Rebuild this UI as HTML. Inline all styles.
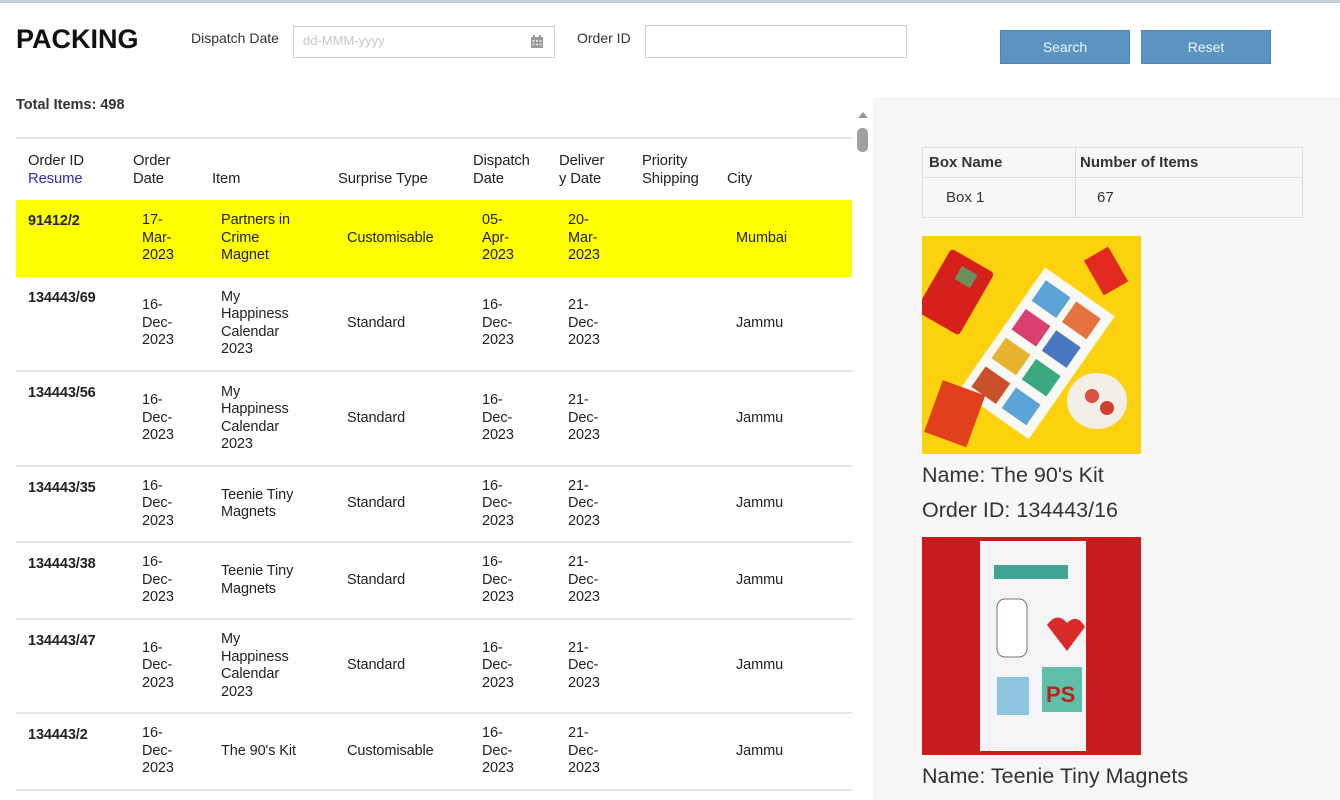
<!DOCTYPE html>
<html><head><meta charset="utf-8"><style>
*{margin:0;padding:0;box-sizing:border-box}
body{width:1340px;height:800px;overflow:hidden;background:#fff;font-family:"Liberation Sans",sans-serif;color:#222;position:relative;font-size:14.5px}
.a{position:absolute}
.topline{left:0;top:0;width:1340px;height:3px;background:#c8ccd4}
.row{position:absolute;left:16px;width:836px;border-bottom:2px solid #e6e6e6}
.c{position:absolute;top:0;height:100%;display:flex;align-items:center;line-height:17.5px;letter-spacing:-0.1px}
.id{align-items:flex-start;padding-top:13px;font-weight:bold}
.hd{position:absolute;line-height:18px;font-size:14.8px;letter-spacing:-0.1px}
.btn{background:#5b93c1;color:#eef4fa;font-size:14px;display:flex;align-items:center;justify-content:center;border:1px solid #4f86b4}
</style></head><body>
<div class="a topline"></div>
<div class="a" style="left:16px;top:24px;font-size:27px;font-weight:bold;color:#111">PACKING</div>
<div class="a" style="left:191px;top:30px;font-size:14px;color:#333">Dispatch Date</div>
<div class="a" style="left:293px;top:26px;width:262px;height:32px;border:1px solid #ccc;border-right:none"></div>
<div class="a" style="left:554px;top:26px;width:1px;height:32px;background:#ccc"></div>
<div class="a" style="left:303px;top:33px;font-size:13px;color:#c8c8c8">dd-MMM-yyyy</div>
<svg class="a" style="left:530px;top:34px" width="14" height="15" viewBox="0 0 14 15"><rect x="1" y="3" width="12" height="11" fill="#999"/><rect x="3" y="1" width="2" height="3" fill="#999"/><rect x="9" y="1" width="2" height="3" fill="#999"/><g fill="#ddd"><rect x="2.5" y="6" width="2" height="2"/><rect x="6" y="6" width="2" height="2"/><rect x="9.5" y="6" width="2" height="2"/><rect x="2.5" y="9.5" width="2" height="2"/><rect x="6" y="9.5" width="2" height="2"/><rect x="9.5" y="9.5" width="2" height="2"/></g></svg>
<div class="a" style="left:577px;top:30px;font-size:14px;color:#333">Order ID</div>
<div class="a" style="left:645px;top:25px;width:262px;height:33px;border:1px solid #ccc"></div>
<div class="a btn" style="left:1000px;top:30px;width:130px;height:34px">Search</div>
<div class="a btn" style="left:1141px;top:30px;width:130px;height:34px">Reset</div>
<div class="a" style="left:16px;top:97px;font-size:14.5px;font-weight:bold;color:#333">Total Items: 498</div>
<div class="a" style="left:16px;top:137px;width:836px;height:2px;background:#e6e6e6"></div>
<svg class="a" style="left:857px;top:110px" width="12" height="10"><path d="M1 8 L6 2 L11 8Z" fill="#999"/></svg>
<div class="a" style="left:857px;top:128px;width:11px;height:24px;border-radius:5px;background:#a0a0a0"></div>
<div class="hd" style="left:28px;top:152px">Order ID<br><span style="color:#2a2ac8">Resume</span></div>
<div class="hd" style="left:133px;top:152px">Order<br>Date</div>
<div class="hd" style="left:212px;top:170px">Item</div>
<div class="hd" style="left:338px;top:170px">Surprise Type</div>
<div class="hd" style="left:473px;top:152px">Dispatch<br>Date</div>
<div class="hd" style="left:559px;top:152px">Deliver<br>y Date</div>
<div class="hd" style="left:642px;top:152px">Priority<br>Shipping</div>
<div class="hd" style="left:727px;top:170px">City</div>
<div class="row" style="top:200px;height:77px;background:#ffff00;border-bottom:none">
<div class="c id" style="left:12px">91412/2</div>
<div class="c" style="left:126px">17-<br>Mar-<br>2023</div>
<div class="c" style="left:205px">Partners in<br>Crime<br>Magnet</div>
<div class="c" style="left:331px">Customisable</div>
<div class="c" style="left:466px">05-<br>Apr-<br>2023</div>
<div class="c" style="left:552px">20-<br>Mar-<br>2023</div>
<div class="c" style="left:720px">Mumbai</div>
</div>
<div class="row" style="top:277px;height:95px">
<div class="c id" style="left:12px">134443/69</div>
<div class="c" style="left:126px">16-<br>Dec-<br>2023</div>
<div class="c" style="left:205px">My<br>Happiness<br>Calendar<br>2023</div>
<div class="c" style="left:331px">Standard</div>
<div class="c" style="left:466px">16-<br>Dec-<br>2023</div>
<div class="c" style="left:552px">21-<br>Dec-<br>2023</div>
<div class="c" style="left:720px">Jammu</div>
</div>
<div class="row" style="top:372px;height:95px">
<div class="c id" style="left:12px">134443/56</div>
<div class="c" style="left:126px">16-<br>Dec-<br>2023</div>
<div class="c" style="left:205px">My<br>Happiness<br>Calendar<br>2023</div>
<div class="c" style="left:331px">Standard</div>
<div class="c" style="left:466px">16-<br>Dec-<br>2023</div>
<div class="c" style="left:552px">21-<br>Dec-<br>2023</div>
<div class="c" style="left:720px">Jammu</div>
</div>
<div class="row" style="top:467px;height:76px">
<div class="c id" style="left:12px">134443/35</div>
<div class="c" style="left:126px">16-<br>Dec-<br>2023</div>
<div class="c" style="left:205px">Teenie Tiny<br>Magnets</div>
<div class="c" style="left:331px">Standard</div>
<div class="c" style="left:466px">16-<br>Dec-<br>2023</div>
<div class="c" style="left:552px">21-<br>Dec-<br>2023</div>
<div class="c" style="left:720px">Jammu</div>
</div>
<div class="row" style="top:543px;height:77px">
<div class="c id" style="left:12px">134443/38</div>
<div class="c" style="left:126px">16-<br>Dec-<br>2023</div>
<div class="c" style="left:205px">Teenie Tiny<br>Magnets</div>
<div class="c" style="left:331px">Standard</div>
<div class="c" style="left:466px">16-<br>Dec-<br>2023</div>
<div class="c" style="left:552px">21-<br>Dec-<br>2023</div>
<div class="c" style="left:720px">Jammu</div>
</div>
<div class="row" style="top:620px;height:94px">
<div class="c id" style="left:12px">134443/47</div>
<div class="c" style="left:126px">16-<br>Dec-<br>2023</div>
<div class="c" style="left:205px">My<br>Happiness<br>Calendar<br>2023</div>
<div class="c" style="left:331px">Standard</div>
<div class="c" style="left:466px">16-<br>Dec-<br>2023</div>
<div class="c" style="left:552px">21-<br>Dec-<br>2023</div>
<div class="c" style="left:720px">Jammu</div>
</div>
<div class="row" style="top:714px;height:77px">
<div class="c id" style="left:12px">134443/2</div>
<div class="c" style="left:126px">16-<br>Dec-<br>2023</div>
<div class="c" style="left:205px">The 90's Kit</div>
<div class="c" style="left:331px">Customisable</div>
<div class="c" style="left:466px">16-<br>Dec-<br>2023</div>
<div class="c" style="left:552px">21-<br>Dec-<br>2023</div>
<div class="c" style="left:720px">Jammu</div>
</div>
<div class="a" style="left:873px;top:97px;width:467px;height:703px;background:#f8f7f5"></div>
<div class="a" style="left:922px;top:147px;width:381px;height:71px;border:1px solid #ddd;font-size:15px;color:#333">
 <div class="a" style="left:152px;top:0;width:1px;height:69px;background:#ddd"></div>
 <div class="a" style="left:0;top:29px;width:379px;height:1px;background:#ddd"></div>
 <div class="a" style="left:6px;top:6px;font-weight:bold">Box Name</div>
 <div class="a" style="left:157px;top:6px;font-weight:bold">Number of Items</div>
 <div class="a" style="left:23px;top:41px">Box 1</div>
 <div class="a" style="left:174px;top:41px">67</div>
</div>
<svg class="a" style="left:922px;top:236px" width="219" height="218" viewBox="0 0 219 218">
<rect width="219" height="218" fill="#fcd20f"/>
<rect x="8" y="20" width="50" height="72" rx="4" fill="#d6201c" transform="rotate(30 33 56)"/>
<rect x="26" y="30" width="18" height="15" fill="#6b8f5c" transform="rotate(30 33 56)"/>
<g transform="rotate(35 110 120)"><rect x="70" y="40" width="85" height="150" fill="#f8f8f4"/>
<rect x="78" y="50" width="30" height="25" fill="#5ba3d6"/><rect x="115" y="50" width="30" height="25" fill="#e57340"/>
<rect x="78" y="85" width="30" height="25" fill="#d94070"/><rect x="115" y="85" width="30" height="25" fill="#4a78c0"/>
<rect x="78" y="120" width="30" height="25" fill="#e7b32e"/><rect x="115" y="120" width="30" height="25" fill="#3aa880"/>
<rect x="78" y="155" width="30" height="25" fill="#c8502a"/><rect x="115" y="155" width="30" height="25" fill="#5ba3d6"/></g>
<rect x="170" y="15" width="28" height="40" fill="#e22a20" transform="rotate(-30 184 35)"/>
<rect x="10" y="150" width="45" height="55" fill="#e2401c" transform="rotate(20 32 178)"/>
<ellipse cx="175" cy="165" rx="30" ry="28" fill="#f3eee6"/><circle cx="170" cy="160" r="7" fill="#d85040"/><circle cx="185" cy="172" r="7" fill="#d04030"/>
</svg>
<div class="a" style="left:922px;top:463px;font-size:21.5px;color:#333">Name: The 90's Kit</div>
<div class="a" style="left:922px;top:498px;font-size:21.5px;color:#333">Order ID: 134443/16</div>
<svg class="a" style="left:922px;top:537px" width="219" height="218" viewBox="0 0 219 218">
<rect width="219" height="218" fill="#c91c1e"/>
<rect x="58" y="4" width="106" height="210" fill="#f4f4f6"/>
<rect x="72" y="28" width="74" height="14" fill="#3fa592"/>
<rect x="75" y="62" width="30" height="58" rx="8" fill="#fff" stroke="#777"/>
<path d="M125 88 q10-14 20 -2 q10-10 18 4 l-18 24z" fill="#d92a2a"/>
<rect x="75" y="140" width="32" height="38" fill="#8fc4e0"/>
<rect x="120" y="130" width="40" height="45" fill="#5ec0a8"/>
<text x="124" y="165" font-size="22" font-family="Liberation Sans" fill="#c02020" font-weight="bold">PS</text>
</svg>
<div class="a" style="left:922px;top:764px;font-size:21.5px;color:#333">Name: Teenie Tiny Magnets</div>
</body></html>
